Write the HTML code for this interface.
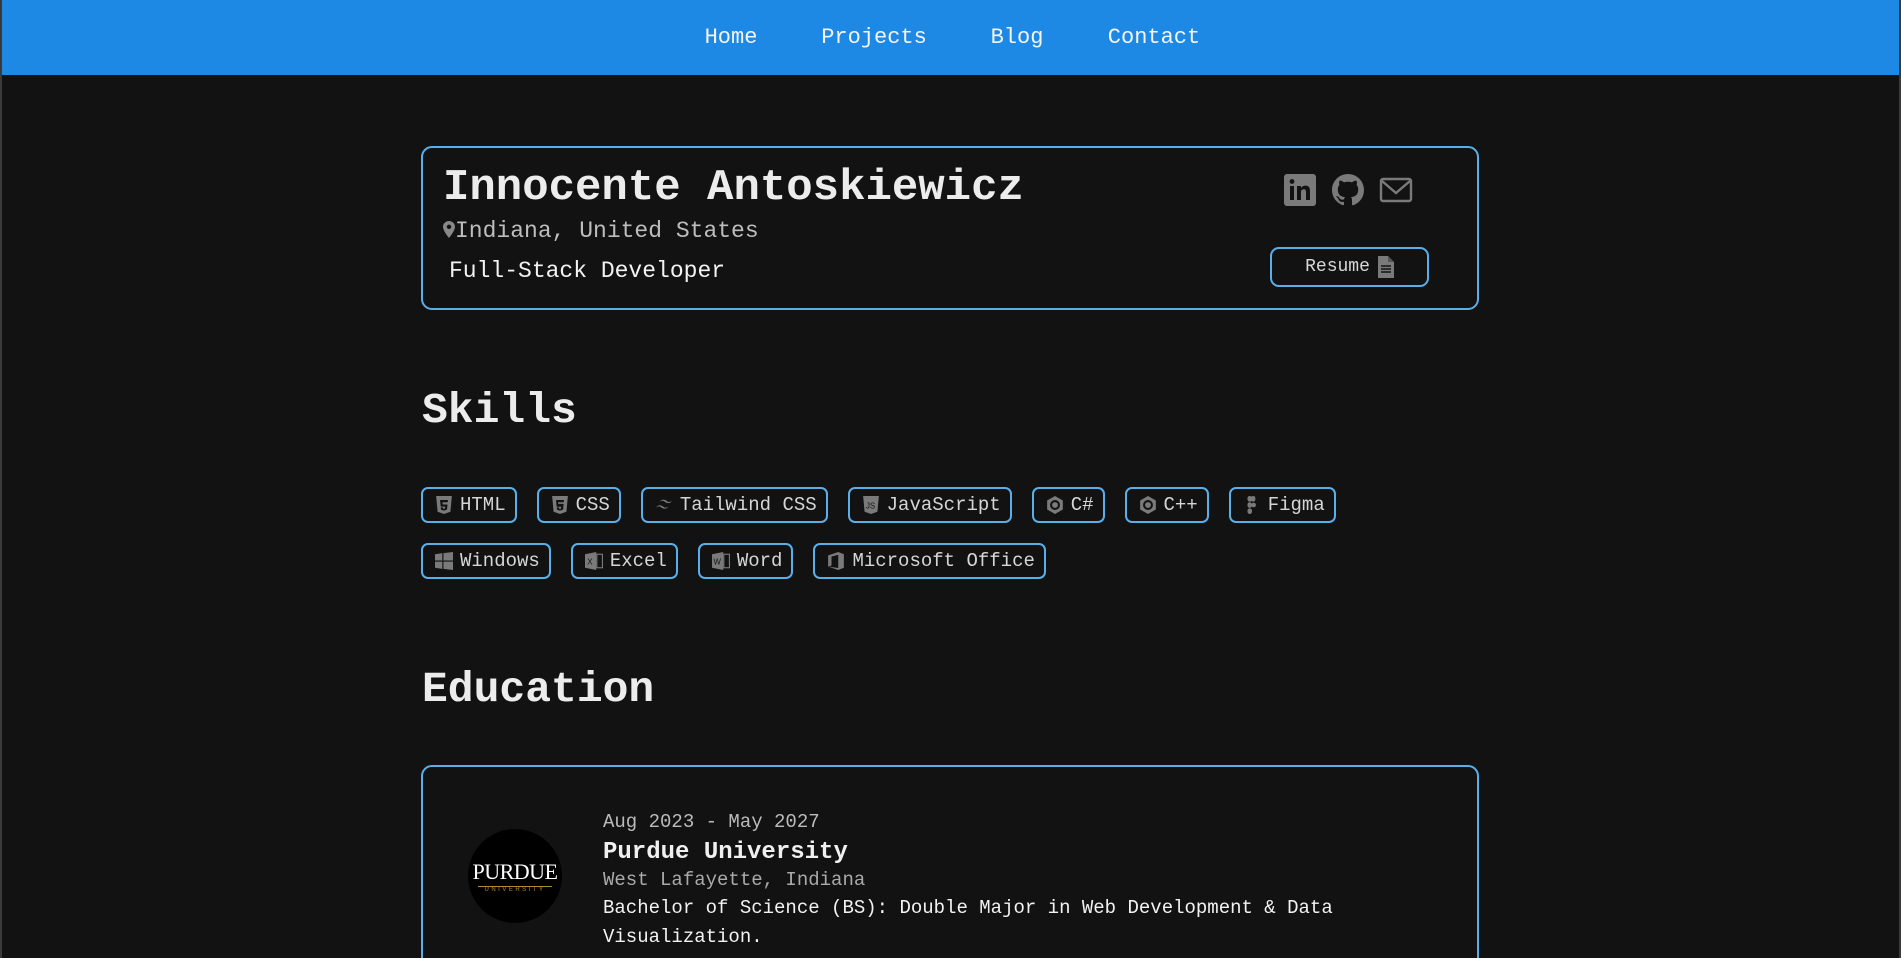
<!DOCTYPE html>
<html><head><meta charset="utf-8"><style>
*{box-sizing:border-box;margin:0;padding:0}
html,body{width:1901px;height:958px;overflow:hidden}
body{background:#121212;font-family:"Liberation Mono","DejaVu Sans Mono",monospace;color:#e6e6e6;position:relative;border-left:2px solid #3a3a3a;border-right:2px solid #3a3a3a}
nav{height:75px;background:#1e88e5;position:relative}
nav a{position:absolute;top:0;line-height:76px;font-size:22px;color:#f4f4f4;transform:translateX(-50%);text-decoration:none}
.card{position:absolute;left:419px;width:1058px;border:2px solid #5aaeea;border-radius:11px}
.name{position:absolute;left:20px;top:15px;font-size:44px;font-weight:bold;color:#ececec}
.loc{position:absolute;left:20px;top:70px;font-size:23px;color:#bdbdbd}
.role{position:absolute;left:26px;top:110px;font-size:23px;color:#f2f2f2}
.icons svg{position:absolute;top:26px}
.resume{position:absolute;left:847px;top:99px;width:159px;height:40px;border:2px solid #5aaeea;border-radius:9px;font-size:18px;color:#d8d8d8;display:flex;align-items:center;justify-content:center;gap:8px}
h2{position:absolute;left:420px;font-size:43px;font-weight:bold;color:#ececec}
.row{position:absolute;left:419px;display:flex;gap:20px}
.chip{height:36px;border:2px solid #5aaeea;border-radius:7px;display:flex;align-items:center;padding:0 9px 0 12px;gap:7px;font-size:19px;color:#d6d6d6}
.chip svg{width:18px;height:18px;fill:#7a7a7a}
.logo{position:absolute;left:45px;top:62px;width:94px;height:94px;border-radius:50%;background:#000;color:#fff;text-align:center;font-family:"Liberation Serif",serif}
</style></head><body>
<nav>
<a style="left:729px">Home</a><a style="left:872px">Projects</a><a style="left:1015px">Blog</a><a style="left:1152px">Contact</a>
</nav>
<div class="card" style="top:146px;height:164px">
<div class="name">Innocente Antoskiewicz</div>
<div class="loc"><svg width="12" height="17" viewBox="0 0 12 17" style="vertical-align:-1px"><path d="M6 0C2.7 0 0 2.6 0 5.8 0 10 6 17 6 17s6-7 6-11.2C12 2.6 9.3 0 6 0zm0 8a2.2 2.2 0 110-4.4A2.2 2.2 0 016 8z" fill="#888"/></svg>Indiana, United States</div>
<div class="role">Full-Stack Developer</div>
<div class="icons">
<svg style="left:861px" width="32" height="32" viewBox="0 0 32 32"><rect width="32" height="32" rx="3" fill="#7a7a7a"/><rect x="6" y="12" width="4" height="14" fill="#121212"/><circle cx="8" cy="7.5" r="2.4" fill="#121212"/><path d="M13 12h4v2c1-1.6 2.6-2.4 4.6-2.4 3.4 0 4.4 2.2 4.4 5.6V26h-4v-8c0-1.8-.6-2.8-2.2-2.8S17 16.4 17 18v8h-4z" fill="#121212"/></svg>
<svg style="left:909px" width="32" height="32" viewBox="0 0 16 16"><path fill="#7a7a7a" d="M8 0C3.58 0 0 3.58 0 8c0 3.54 2.290 6.53 5.47 7.59.4.07.55-.17.55-.38v-1.33c-2.230.48-2.700-1.070-2.700-1.070-.36-.92-.89-1.170-.89-1.170-.73-.5.06-.49.06-.49.8.06 1.23.83 1.23.83.72 1.22 1.87.87 2.33.66.07-.52.28-.87.5-1.07-1.78-.2-3.640-.89-3.640-3.950 0-.87.31-1.59.82-2.15-.08-.2-.36-1.02.08-2.12 0 0 .67-.21 2.2.82a7.6 7.6 0 014 0c1.53-1.04 2.2-.82 2.2-.82.44 1.1.16 1.92.08 2.12.51.56.82 1.27.82 2.15 0 3.07-1.87 3.75-3.65 3.95.29.25.54.73.54 1.48v2.2c0 .21.15.46.55.38A8 8 0 0016 8c0-4.42-3.58-8-8-8z"/></svg>
<svg style="left:956px" width="34" height="32" viewBox="0 0 34 32"><rect x="2" y="5" width="30" height="22" rx="2" fill="none" stroke="#7a7a7a" stroke-width="2.4"/><path d="M3 7l14 12L31 7" fill="none" stroke="#7a7a7a" stroke-width="2.4"/></svg>
</div>
<div class="resume">Resume <svg width="16" height="22" viewBox="0 0 16 22"><path d="M0 0h10l6 6v16H0z" fill="#7a7a7a"/><path d="M10 0v6h6" fill="#555"/><path d="M3 10h10M3 13h10M3 16h10" stroke="#121212" stroke-width="1.5"/></svg></div>
</div>

<h2 style="top:386px">Skills</h2>
<div class="row" style="top:487px">
<div class="chip"><svg viewBox="0 0 16 16"><path d="M1 0h14l-1.3 14L8 16l-5.7-2z"/><path d="M4.5 3.5h7l-.2 2H6.7l.1 2h4.3l-.4 4.5L8 13l-2.7-.9-.1-2h1.8l.1 1 .9.3.9-.3.1-1.7H5.1z" fill="#121212"/></svg>HTML</div>
<div class="chip"><svg viewBox="0 0 16 16"><path d="M1 0h14l-1.3 14L8 16l-5.7-2z"/><path d="M4.5 3.5h7l-.2 2h-5l.1 1.5h4.8l-.4 5L8 13l-2.7-.9-.1-2h1.8l.1 1 .9.3.9-.3.1-1.6H5z" fill="#121212"/></svg>CSS</div>
<div class="chip"><svg viewBox="0 0 16 16"><path d="M4 6c1-2.5 2.7-3.3 5-2.5 1.3.5 2 1.8 3.6 1.8 1.2 0 2-.6 2.6-1.8-.8 2.5-2.6 3.3-5 2.5-1.3-.5-2-1.8-3.6-1.8C5.4 4.2 4.6 4.8 4 6zM.8 11c.8-2.5 2.6-3.3 5-2.5 1.3.5 2 1.8 3.6 1.8 1.2 0 2-.6 2.6-1.8-.8 2.5-2.6 3.3-5 2.5-1.3-.5-2-1.8-3.600-1.8-1.2 0-2 .6-2.6 1.8z"/></svg>Tailwind CSS</div>
<div class="chip"><svg viewBox="0 0 16 16"><path d="M1 0h14l-1.3 14L8 16l-5.7-2z"/><text x="3.5" y="11" font-size="7" fill="#121212" font-family="Liberation Sans">JS</text></svg>JavaScript</div>
<div class="chip"><svg viewBox="0 0 16 16"><path d="M8 0l7 4v8l-7 4-7-4V4z"/><circle cx="8" cy="8" r="3.5" fill="none" stroke="#121212" stroke-width="1.8"/></svg>C#</div>
<div class="chip"><svg viewBox="0 0 16 16"><path d="M8 0l7 4v8l-7 4-7-4V4z"/><circle cx="8" cy="8" r="3.5" fill="none" stroke="#121212" stroke-width="1.8"/></svg>C++</div>
<div class="chip"><svg viewBox="0 0 16 16"><rect x="4" y="0" width="4" height="5" rx="2"/><rect x="7" y="0" width="4" height="5" rx="2"/><rect x="4" y="5.5" width="4" height="5" rx="2"/><circle cx="9.5" cy="8" r="2"/><rect x="4" y="11" width="4" height="5" rx="2"/></svg>Figma</div>
</div>
<div class="row" style="top:543px">
<div class="chip"><svg viewBox="0 0 16 16"><path d="M0 2l6.5-1v6.5H0zM7.5 1L16 0v7.5H7.5zM0 8.5h6.5V15L0 14zM7.5 8.5H16V16l-8.5-1z"/></svg>Windows</div>
<div class="chip"><svg viewBox="0 0 16 16"><path d="M0 2l10-2v16L0 14z"/><rect x="10.5" y="2" width="5" height="12" fill="none" stroke="#7a7a7a"/><text x="2" y="11" font-size="7" fill="#121212" font-family="Liberation Sans">X</text></svg>Excel</div>
<div class="chip"><svg viewBox="0 0 16 16"><path d="M0 2l10-2v16L0 14z"/><rect x="10.5" y="2" width="5" height="12" fill="none" stroke="#7a7a7a"/><text x="1.3" y="11" font-size="7" fill="#121212" font-family="Liberation Sans">W</text></svg>Word</div>
<div class="chip"><svg viewBox="0 0 16 16"><path d="M1 3l9-3 5 2v12l-5 2-9-3 9 1.2V2.5L4 4v8l-3 1z"/></svg>Microsoft Office</div>
</div>

<h2 style="top:665px">Education</h2>
<div class="card" style="top:765px;height:220px">
<div class="logo"><div style="font-size:22px;margin-top:30px;letter-spacing:-0.5px">PURDUE</div><div style="border-top:1px solid #b08a2e;width:74px;margin:1px auto 0;font-size:6px;color:#b08a2e;letter-spacing:2.5px;font-family:'Liberation Sans',sans-serif">UNIVERSITY</div></div>
<div style="position:absolute;left:180px;top:44px;font-size:19px;color:#bbb">Aug 2023 - May 2027</div>
<div style="position:absolute;left:180px;top:72px;font-size:24px;font-weight:bold;color:#f0f0f0">Purdue University</div>
<div style="position:absolute;left:180px;top:102px;font-size:19px;color:#aaa">West Lafayette, Indiana</div>
<div style="position:absolute;left:180px;top:127px;width:760px;font-size:19px;line-height:29px;color:#f2f2f2">Bachelor of Science (BS): Double Major in Web Development &amp; Data Visualization.</div>
</div>
</body></html>
